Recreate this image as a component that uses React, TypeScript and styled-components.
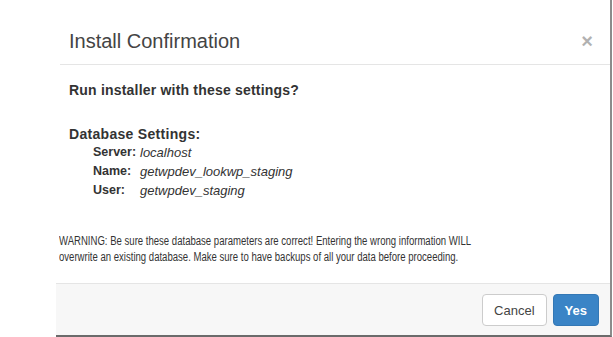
import styled, { createGlobalStyle } from 'styled-components';

const GlobalStyle = createGlobalStyle`
  html, body {
    margin: 0;
    padding: 0;
    background: #fff;
  }
  body {
    font-family: "Liberation Sans", Arial, sans-serif;
    color: #333;
  }
`

const Page = styled.div`
  width: 613px;
  height: 337px;
  padding-left: 56px;
  box-sizing: border-box;
  overflow: hidden;
`

const Modal = styled.div`
  width: 556px;
  height: 337px;
  display: flex;
  flex-direction: column;
  background: #fff;
  border-right: 2px solid #8c8c8c;
  border-bottom: 2px solid #6b6b6b;
  box-sizing: border-box;
`

const Header = styled.div`
  display: flex;
  align-items: center;
  justify-content: space-between;
  padding: 30px 17px 12px 9px;
  margin-left: 4px;
  border-bottom: 1px solid #e5e5e5;
`

const Title = styled.h4`
  margin: 0;
  font-size: 20px;
  font-weight: 400;
  line-height: 22px;
  color: #444;
`

const Close = styled.button`
  border: 0;
  background: transparent;
  padding: 0;
  font-family: "Liberation Sans", Arial, sans-serif;
  font-size: 20px;
  font-weight: 700;
  line-height: 20px;
  color: #000;
  opacity: 0.3;
  cursor: pointer;
`

const Body = styled.div`
  flex: 1;
  padding: 15px 13px 0 13px;
`

const Question = styled.div`
  font-size: 14px;
  font-weight: 700;
  line-height: 20px;
  letter-spacing: 0.2px;
`

const SectionTitle = styled.div`
  margin-top: 25px;
  font-size: 14px;
  font-weight: 700;
  line-height: 18px;
  letter-spacing: 0.3px;
`

const Settings = styled.div`
  display: grid;
  grid-template-columns: 47px auto;
  padding-left: 24px;
  font-size: 13px;
  line-height: 19px;
`

const Label = styled.span`
  font-weight: 700;
  font-size: 12.5px;
`

const Value = styled.span`
  font-style: italic;
`

/* the reference uses a condensed face; squeeze regular Liberation Sans */
const Warning = styled.p`
  margin: 33px 0 0 -10px;
  font-size: 12.5px;
  line-height: 16px;
  color: #333;
  white-space: nowrap;
  transform: scaleX(0.765);
  transform-origin: left top;
`

const Footer = styled.div`
  display: flex;
  justify-content: flex-end;
  gap: 6px;
  height: 52px;
  padding: 10px 11px 0 0;
  box-sizing: border-box;
  background: #f7f7f7;
  border-top: 1px solid #e5e5e5;
`

const Button = styled.button<{ $primary?: boolean }>`
  height: 32px;
  padding: 0 11px;
  border-radius: 4px;
  font-family: "Liberation Sans", Arial, sans-serif;
  font-size: 13px;
  font-weight: ${p => (p.$primary ? 700 : 400)};
  color: ${p => (p.$primary ? '#fff' : '#444')};
  background: ${p => (p.$primary ? '#3a84c6' : '#fff')};
  border: 1px solid ${p => (p.$primary ? '#3478b5' : '#ccc')};
  cursor: pointer;
`

const settings = [
  { label: 'Server:', value: 'localhost' },
  { label: 'Name:', value: 'getwpdev_lookwp_staging' },
  { label: 'User:', value: 'getwpdev_staging' },
]

const App = () => {
  return (
    <Page>
      <GlobalStyle />
      <Modal>
        <Header>
          <Title>Install Confirmation</Title>
          <Close aria-label="Close">×</Close>
        </Header>
        <Body>
          <Question>Run installer with these settings?</Question>
          <SectionTitle>Database Settings:</SectionTitle>
          <Settings>
            {settings.map(s => (
              <>
                <Label key={s.label}>{s.label}</Label>
                <Value key={s.value}>{s.value}</Value>
              </>
            ))}
          </Settings>
          <Warning>
            WARNING: Be sure these database parameters are correct! Entering the wrong information WILL
            <br />
            overwrite an existing database. Make sure to have backups of all your data before proceeding.
          </Warning>
        </Body>
        <Footer>
          <Button>Cancel</Button>
          <Button $primary>Yes</Button>
        </Footer>
      </Modal>
    </Page>
  )
}

export default App
